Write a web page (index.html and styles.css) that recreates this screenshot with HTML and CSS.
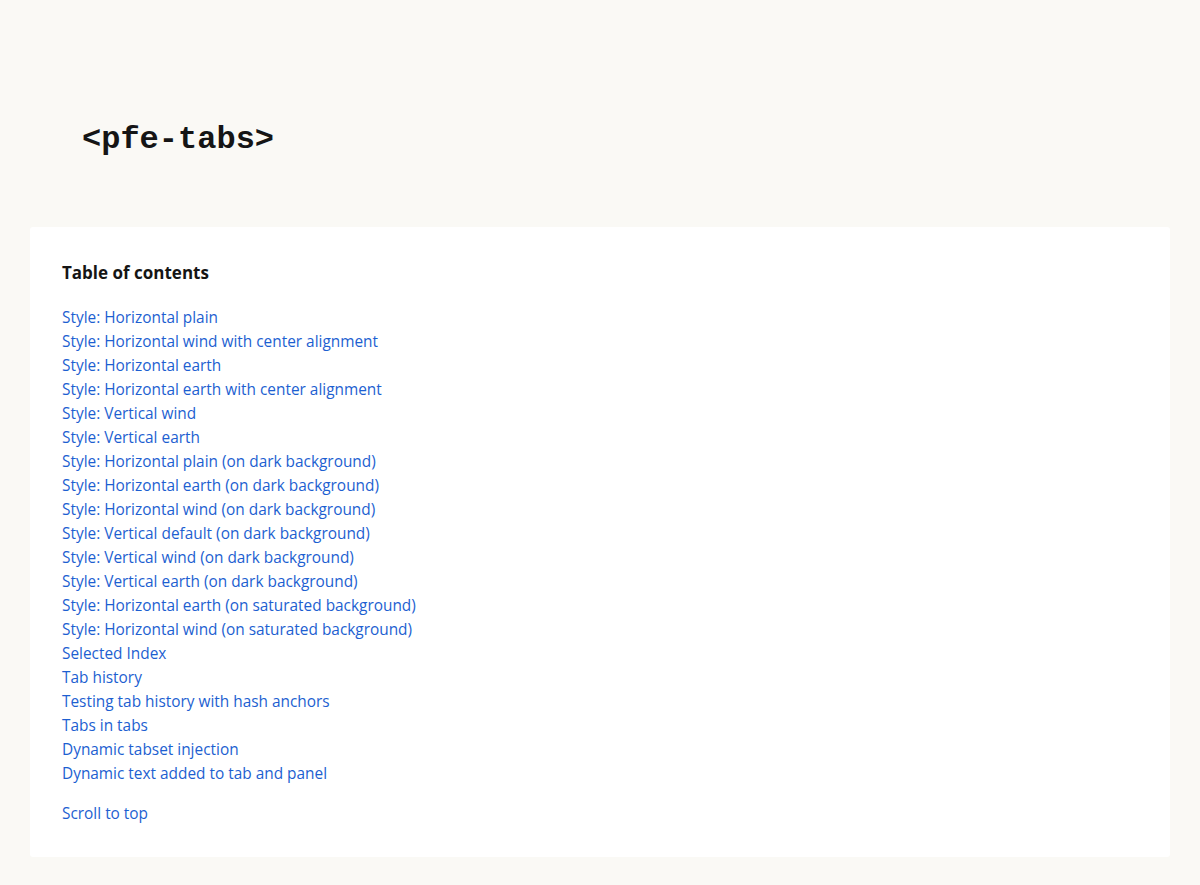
FILE: index.html
```html
<!DOCTYPE html>
<html lang="en">
<head>
<meta charset="utf-8">
<title>pfe-tabs</title>
<link rel="stylesheet" href="styles.css">
</head>
<body>
<header class="page-header">
  <h1 class="page-title">&lt;pfe-tabs&gt;</h1>
</header>
<main class="card">
  <h2 class="toc-title">Table of contents</h2>
  <ul class="toc-list">
    <li><a href="#">Style: Horizontal plain</a></li>
    <li><a href="#">Style: Horizontal wind with center alignment</a></li>
    <li><a href="#">Style: Horizontal earth</a></li>
    <li><a href="#">Style: Horizontal earth with center alignment</a></li>
    <li><a href="#">Style: Vertical wind</a></li>
    <li><a href="#">Style: Vertical earth</a></li>
    <li><a href="#">Style: Horizontal plain (on dark background)</a></li>
    <li><a href="#">Style: Horizontal earth (on dark background)</a></li>
    <li><a href="#">Style: Horizontal wind (on dark background)</a></li>
    <li><a href="#">Style: Vertical default (on dark background)</a></li>
    <li><a href="#">Style: Vertical wind (on dark background)</a></li>
    <li><a href="#">Style: Vertical earth (on dark background)</a></li>
    <li><a href="#">Style: Horizontal earth (on saturated background)</a></li>
    <li><a href="#">Style: Horizontal wind (on saturated background)</a></li>
    <li><a href="#">Selected Index</a></li>
    <li><a href="#">Tab history</a></li>
    <li><a href="#">Testing tab history with hash anchors</a></li>
    <li><a href="#">Tabs in tabs</a></li>
    <li><a href="#">Dynamic tabset injection</a></li>
    <li><a href="#">Dynamic text added to tab and panel</a></li>
  </ul>
  <a class="scroll-top" href="#">Scroll to top</a>
</main>
</body>
</html>
```

FILE: styles.css
```css
html, body {
  margin: 0;
  padding: 0;
  background: #faf9f5;
}
body {
  font-family: "Open Sans", "Liberation Sans", sans-serif;
  color: #151515;
}
.page-header {
  padding: 120px 0 67px 82px;
}
.page-title {
  margin: 0;
  font-family: "Liberation Mono", "Courier New", monospace;
  font-weight: 700;
  font-size: 32px;
  line-height: 40px;
  color: #151515;
}
.card {
  display: block;
  margin: 0 30px;
  background: #ffffff;
  border-radius: 3px;
  padding: 34px 32px 31px;
}
.toc-title {
  margin: 0 0 21px;
  font-size: 17px;
  font-weight: 700;
  line-height: 24px;
}
.toc-list {
  list-style: none;
  margin: 0 0 16px;
  padding: 0;
}
.toc-list li {
  line-height: 24px;
  font-size: 15.4px;
}
a {
  color: #1d5fd1;
  text-decoration: none;
}
.scroll-top {
  display: block;
  width: max-content;
  font-size: 15.4px;
  line-height: 24px;
}
```
